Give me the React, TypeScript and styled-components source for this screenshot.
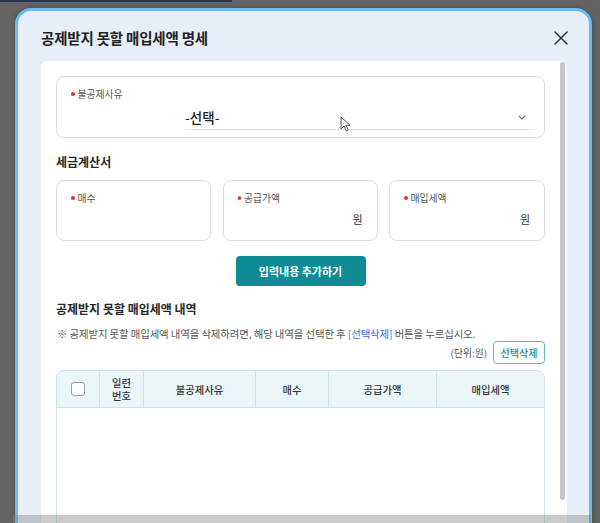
import React from 'react';
import styled, { createGlobalStyle } from 'styled-components';

const GlobalStyle = createGlobalStyle`
	html, body {
		margin: 0;
		padding: 0;
		background: #636363;
	}
	body {
		font-family: "Noto Sans CJK KR", "Noto Sans", sans-serif;
		color: #222;
	}
	* {
		box-sizing: border-box;
	}
`;

const columns = [
	{ key: 'check', width: '43px' },
	{ key: 'no', width: '44px', label: '일련\n번호' },
	{ key: 'reason', width: '112px', label: '불공제사유' },
	{ key: 'count', width: '73px', label: '매수' },
	{ key: 'supply', width: '108px', label: '공급가액' },
	{ key: 'tax', width: '1fr', label: '매입세액' },
];

const ChevronIcon = () => (
	<svg width="8" height="5" viewBox="0 0 8 5" fill="none">
		<path d="M1 1l3 3 3-3" stroke="#777" strokeWidth="1.1" strokeLinecap="round" strokeLinejoin="round" />
	</svg>
);

const CloseIcon = () => (
	<svg width="14" height="14" viewBox="0 0 14 14" fill="none">
		<path d="M1 1l12 12M13 1L1 13" stroke="#333" strokeWidth="1.5" strokeLinecap="round" />
	</svg>
);

const CursorIcon = () => (
	<svg width="11" height="16" viewBox="0 0 11 16" fill="none">
		<path d="M1 1v12l3-3 2.2 5 2-0.9-2.2-4.8H10z" fill="#fff" stroke="#555" strokeWidth="1" strokeLinejoin="round" />
	</svg>
);

export default function App() {
	return (
		<Page>
			<GlobalStyle />
			<TopLine />
			<Modal>
				<Header>
					<Title>공제받지 못할 매입세액 명세</Title>
					<CloseButton aria-label="닫기"><CloseIcon /></CloseButton>
				</Header>
				<Panel>
					<Content>
						<FieldBox>
							<Label>불공제사유</Label>
							<SelectField>
								<span>-선택-</span>
								<ChevronIcon />
							</SelectField>
						</FieldBox>

						<SectionTitle>세금계산서</SectionTitle>
						<FieldGrid>
							<SmallBox>
								<Label>매수</Label>
								<Unit></Unit>
							</SmallBox>
							<SmallBox>
								<Label>공급가액</Label>
								<Unit>원</Unit>
							</SmallBox>
							<SmallBox>
								<Label>매입세액</Label>
								<Unit>원</Unit>
							</SmallBox>
						</FieldGrid>

						<ButtonRow>
							<PrimaryButton>입력내용 추가하기</PrimaryButton>
						</ButtonRow>

						<SectionTitle $gap={15}>공제받지 못할 매입세액 내역</SectionTitle>
						<Note>
							※ 공제받지 못할 매입세액 내역을 삭제하려면, 해당 내역을 선택한 후 <NoteLink>[선택삭제]</NoteLink> 버튼을 누르십시오.
						</Note>
						<ToolRow>
							<UnitText>(단위:원)</UnitText>
							<OutlineButton>선택삭제</OutlineButton>
						</ToolRow>

						<Table>
							<TableHead $cols={columns.map(c => c.width).join(' ')}>
								{columns.map((c, i) => (
									<HeadCell key={c.key} $last={i === columns.length - 1}>
										{c.key === 'check' ? <CheckBox /> : c.label}
									</HeadCell>
								))}
							</TableHead>
							<TableBody />
						</Table>
					</Content>
					<ScrollTrack>
						<ScrollThumb />
					</ScrollTrack>
				</Panel>
			</Modal>
			<Cursor><CursorIcon /></Cursor>
			<BottomShade />
		</Page>
	);
}

const Page = styled.div`
	position: relative;
	width: 600px;
	height: 523px;
	overflow: hidden;
	background: #646464;
	padding: 8px 0 0 15px;
`;

const TopLine = styled.div`
	position: absolute;
	top: 0;
	left: 0;
	width: 232px;
	height: 2px;
	background: #2a3552;
`;

const Modal = styled.div`
	width: 577px;
	height: 560px;
	border: 3px solid #66bcf3;
	border-radius: 16px;
	background: #e8eef9;
	display: flex;
	flex-direction: column;
	box-shadow: 0 0 4px rgba(0, 0, 0, 0.25);
`;

const Header = styled.div`
	height: 50px;
	flex-shrink: 0;
	display: flex;
	align-items: center;
	justify-content: space-between;
	padding: 3px 21px 0 23px;
`;

const Title = styled.h1`
	margin: 0;
	font-size: 14.5px;
	font-weight: 700;
	color: #222;
	letter-spacing: -0.2px;
`;

const CloseButton = styled.button`
	border: none;
	background: transparent;
	padding: 0;
	display: flex;
	cursor: pointer;
`;

const Panel = styled.div`
	flex: 1;
	margin: 0 22px 0 23px;
	background: #fff;
	border-radius: 6px 6px 0 0;
	display: flex;
`;

const Content = styled.div`
	width: 504px;
	padding: 15px 0 0 15px;
	display: flex;
	flex-direction: column;
`;

const ScrollTrack = styled.div`
	flex: 1;
	padding: 1px 2px 0 15px;
`;

const ScrollThumb = styled.div`
	width: 5px;
	height: 438px;
	border-radius: 3px;
	background: #c6c6c6;
`;

const FieldBox = styled.div`
	height: 62px;
	border: 1px solid #dedede;
	border-radius: 8px;
	padding: 11px 10px 0 14px;
	display: flex;
	flex-direction: column;
`;

const Label = styled.div`
	display: flex;
	align-items: center;
	font-size: 9.8px;
	line-height: 12px;
	color: #555;
	&::before {
		content: '';
		width: 3.5px;
		height: 3.5px;
		border-radius: 50%;
		background: #e53935;
		margin-right: 3px;
	}
`;

const SelectField = styled.div`
	margin: 7px 0 0 auto;
	width: 349px;
	height: 23px;
	border-bottom: 1px solid #e3e3e3;
	display: flex;
	align-items: center;
	justify-content: space-between;
	padding: 0 8px 2px 0;
	font-size: 13.5px;
	font-weight: 500;
	color: #222;
`;

const SectionTitle = styled.h2<{ $gap?: number }>`
	margin: ${p => p.$gap ?? 16}px 0 0;
	font-size: 12px;
	line-height: 16px;
	font-weight: 700;
	color: #262626;
`;

const FieldGrid = styled.div`
	margin-top: 10px;
	display: grid;
	grid-template-columns: 155px 155px 156px;
	justify-content: space-between;
`;

const SmallBox = styled.div`
	height: 61px;
	border: 1px solid #dedede;
	border-radius: 8px;
	padding: 11px 14px 0 14px;
	display: flex;
	flex-direction: column;
`;

const Unit = styled.div`
	margin-top: 8px;
	text-align: right;
	font-size: 11px;
	line-height: 14px;
	color: #333;
	min-height: 14px;
`;

const ButtonRow = styled.div`
	margin-top: 15px;
	display: flex;
	justify-content: center;
`;

const PrimaryButton = styled.button`
	width: 130px;
	height: 30px;
	border: none;
	border-radius: 4px;
	background: #0f8b94;
	color: #fff;
	font-family: inherit;
	font-size: 11px;
	font-weight: 700;
`;

const Note = styled.p`
	margin: 10px 0 0 1px;
	font-size: 10.4px;
	line-height: 14px;
	color: #555;
	letter-spacing: -0.1px;
`;

const NoteLink = styled.span`
	color: #2f6fe0;
`;

const ToolRow = styled.div`
	display: flex;
	justify-content: flex-end;
	align-items: center;
	gap: 6px;
`;

const UnitText = styled.span`
	font-size: 9.8px;
	color: #555;
`;

const OutlineButton = styled.button`
	width: 52px;
	height: 23px;
	border: 1px solid #63b6bc;
	border-radius: 4px;
	background: #fff;
	color: #0f8b94;
	font-family: inherit;
	font-size: 10px;
	font-weight: 500;
	padding: 0;
`;

const Table = styled.div`
	margin-top: 6px;
	border: 1px solid #cfe4e6;
	border-radius: 8px 8px 0 0;
	overflow: hidden;
	flex: 1;
	display: flex;
	flex-direction: column;
`;

const TableHead = styled.div<{ $cols: string }>`
	display: grid;
	grid-template-columns: ${p => p.$cols};
	height: 37px;
	background: #eaf6f7;
	border-bottom: 1px solid #cfe4e6;
`;

const HeadCell = styled.div<{ $last?: boolean }>`
	display: flex;
	align-items: center;
	justify-content: center;
	text-align: center;
	white-space: pre-line;
	font-size: 10.3px;
	line-height: 13px;
	font-weight: 500;
	color: #333;
	border-right: ${p => (p.$last ? 'none' : '1px solid #cfe4e6')};
`;

const CheckBox = styled.span`
	width: 14px;
	height: 14px;
	border: 1px solid #9a9a9a;
	border-radius: 3px;
	background: #fff;
`;

const TableBody = styled.div`
	flex: 1;
	background: #fff;
`;

const Cursor = styled.div`
	position: absolute;
	left: 340px;
	top: 113px;
`;

const BottomShade = styled.div`
	position: absolute;
	left: 13px;
	right: 9px;
	bottom: 0;
	height: 8px;
	background: rgba(130, 130, 130, 0.42);
`;
